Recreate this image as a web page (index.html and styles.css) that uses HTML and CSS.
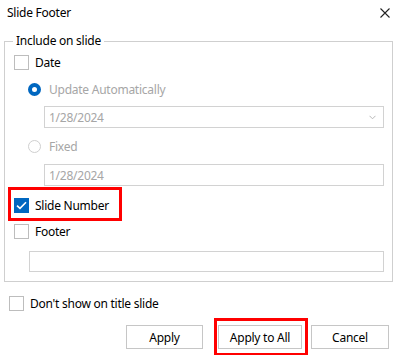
FILE: index.html
```html
<!DOCTYPE html>
<html lang="en">
<head>
    <meta charset="UTF-8">
    <title>Slide Footer</title>
    <link rel="stylesheet" href="styles.css">
</head>
<body>
    <div class="dialog">
        <div class="titlebar">
            <span class="title">Slide Footer</span>
            <svg class="close" width="10" height="10" viewBox="0 0 10 10">
                <path d="M0.5 0.5 L9.5 9.5 M9.5 0.5 L0.5 9.5" stroke="#222" stroke-width="1.1" fill="none"/>
            </svg>
        </div>

        <fieldset class="group">
            <legend>Include on slide</legend>

            <div class="row row-date">
                <span class="box"></span>
                <span class="label">Date</span>
            </div>

            <div class="sub">
                <div class="row row-radio">
                    <span class="radio on"></span>
                    <span class="label muted">Update Automatically</span>
                </div>
                <div class="field field-select">
                    <span class="muted">1/28/2024</span>
                    <svg class="chevron" width="7" height="5" viewBox="0 0 7 5">
                        <path d="M0.5 0.8 L3.5 3.8 L6.5 0.8" stroke="#b8b8b8" stroke-width="1" fill="none"/>
                    </svg>
                </div>
                <div class="row row-fixed">
                    <span class="radio"></span>
                    <span class="label muted">Fixed</span>
                </div>
                <div class="field field-text">
                    <span class="muted">1/28/2024</span>
                </div>
            </div>

            <div class="row row-number">
                <span class="box checked">
                    <svg width="11" height="9" viewBox="0 0 11 9">
                        <path d="M1 4.6 L4 7.4 L10 1.2" stroke="#fff" stroke-width="1.6" fill="none"/>
                    </svg>
                </span>
                <span class="label">Slide Number</span>
                <span class="mark mark-number"></span>
            </div>

            <div class="row row-footer">
                <span class="box"></span>
                <span class="label">Footer</span>
            </div>
            <div class="field field-footer"></div>
        </fieldset>

        <div class="row row-title">
            <span class="box"></span>
            <span class="label">Don't show on title slide</span>
        </div>

        <div class="actions">
            <button class="btn btn-apply">Apply</button>
            <button class="btn btn-all">Apply to All<span class="mark mark-all"></span></button>
            <button class="btn btn-cancel">Cancel</button>
        </div>
    </div>
</body>
</html>
```

FILE: styles.css
```css
* {
    margin: 0;
    padding: 0;
    box-sizing: border-box;
}

body {
    width: 397px;
    height: 355px;
    background: #fff;
    color: #000;
    font-family: 'Noto Sans', 'Open Sans', sans-serif;
    font-size: 12px;
    letter-spacing: -0.25px;
    overflow: hidden;
}

.dialog {
    position: relative;
    height: 355px;
}

.titlebar {
    height: 26px;
    display: flex;
    align-items: center;
    justify-content: space-between;
    padding: 0 7px 0 7px;
}

.title {
    line-height: 26px;
}

.close {
    display: block;
}

.group {
    margin: 7px 4px 0 4px;
    border: 1px solid #cfcfcf;
    padding: 3px 8px 9px 9px;
    height: 249px;
}

.group legend {
    margin-left: -1px;
    padding: 0 3px;
    line-height: 16px;
}

.row {
    position: relative;
    display: flex;
    align-items: center;
    height: 20px;
}

.label {
    margin-left: 6px;
}

.muted {
    color: #a6a6a6;
}

.box {
    width: 15px;
    height: 15px;
    border: 1px solid #bdbdbd;
    background: #fff;
    display: flex;
    align-items: center;
    justify-content: center;
}

.box.checked {
    background: #0067c0;
    border-color: #0067c0;
}

.box.checked svg {
    display: block;
}

.radio {
    width: 13px;
    height: 13px;
    border-radius: 50%;
    border: 1px solid #cfcfcf;
    background: #fff;
}

.radio.on {
    border: 4px solid #0067c0;
}

.sub {
    padding-left: 14px;
}

.row-radio {
    margin-top: 7px;
}

.row-radio .label,
.row-fixed .label {
    margin-left: 8px;
}

.field {
    height: 22px;
    border: 1px solid #d2d2d2;
    display: flex;
    align-items: center;
    justify-content: space-between;
    padding: 0 5px 0 4px;
}

.field-select {
    margin-top: 7px;
    margin-left: 16px;
}

.chevron {
    display: block;
    margin-right: 2px;
}

.row-fixed {
    margin-top: 8px;
}

.field-text {
    margin-top: 8px;
    margin-left: 16px;
}

.row-number {
    margin-top: 9px;
}

.row-footer {
    margin-top: 6px;
}

.field-footer {
    margin-top: 10px;
    margin-left: 15px;
    height: 21px;
}

.row-title {
    margin: 11px 0 0 9px;
    height: 20px;
}

.actions {
    display: flex;
    margin: 12px 0 0 126px;
}

.btn {
    position: relative;
    height: 24px;
    background: #fff;
    border: 1px solid #c6c6c6;
    font-family: inherit;
    font-size: 12px;
    letter-spacing: inherit;
    color: #000;
}

.btn-apply {
    width: 77px;
}

.btn-all {
    width: 84px;
    margin-left: 15px;
}

.btn-cancel {
    width: 78px;
    margin-left: 9px;
}

/* red highlight annotations */
.mark {
    position: absolute;
    border: 3px solid #f00;
    pointer-events: none;
}

.mark-number {
    left: -6px;
    top: -8px;
    width: 114px;
    height: 34px;
}

.mark-all {
    left: -5px;
    top: -8px;
    width: 94px;
    height: 38px;
}
```
